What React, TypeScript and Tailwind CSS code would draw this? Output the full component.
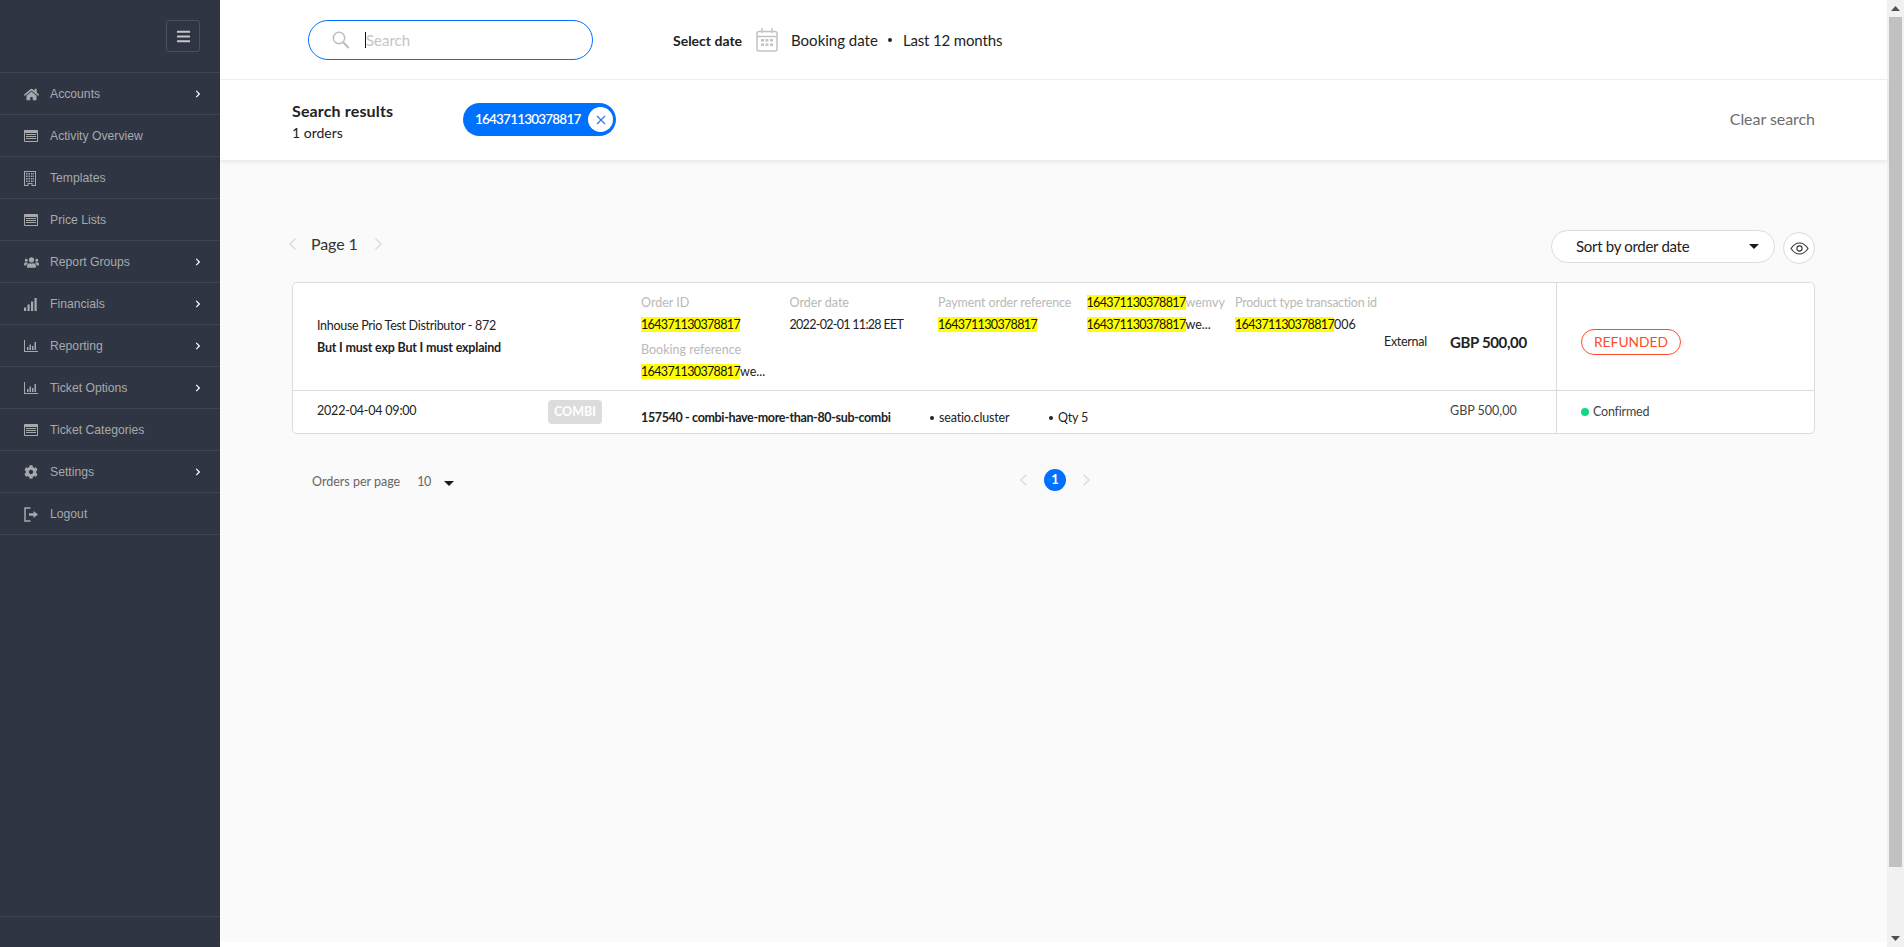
import React from "react";
import { FaHome, FaUsers, FaCog, FaChevronRight, FaBars } from "react-icons/fa";

const ListAlt = () => (
  <svg width="14" height="12" viewBox="0 0 14 12" fill="currentColor"><path fillRule="evenodd" d="M.8 0h12.400c.4 0 .8.4.8.8v10.400c0 .4-.4.8-.8.8H.8c-.4 0-.8-.4-.8-.8V.8C0 .4.4 0 .8 0zM1 3v8h12V3H1zm1 1h10v1H2V4zm0 2h10v1H2V6zm0 2h10v1H2V8z" /></svg>
);
const Building = () => (
  <svg width="12" height="15" viewBox="0 0 12 15" fill="currentColor"><path fillRule="evenodd" d="M0 0h12v15H7.500v-2h-3v2H0V0zm1 1v13h2.500v-2h5v2H11V1H1zm1 1h1.500v1.500H2V2zm2.500 0H6v1.500H4.500V2zM7 2h1.500v1.500H7V2zm2.200 0H10v1.500h-.8V2zM2 4.500h1.500V6H2V4.500zm2.500 0H6V6H4.500V4.500zm2.500 0h1.500V6H7V4.500zm2.200 0H10V6h-.8V4.500zM2 7h1.500v1.500H2V7zm2.500 0H6v1.500H4.500V7zM7 7h1.500v1.500H7V7zm2.200 0H10v1.500h-.8V7zM2 9.500h1.500V11H2V9.500zm2.500 0H6V11H4.500V9.500zm2.500 0h1.500V11H7V9.500zm2.200 0H10V11h-.8V9.500z" /></svg>
);
const Signal = () => (
  <svg width="13" height="13" viewBox="0 0 13 13" fill="currentColor"><path d="M0 9.500h2.200V13H0zM3.500 6.500h2.200V13H3.500zM7 3.500h2.200V13H7zM10.500 0h2.200v13h-2.200z" /></svg>
);
const ChartO = () => (
  <svg width="14" height="12" viewBox="0 0 14 12" fill="currentColor"><path d="M0 0h1v11h13v1H0z" /><path d="M3 7h1.500v3H3zM5.500 4.500H7V10H5.500zM8 6h1.500v4H8zM10.500 2H12v8h-1.500z" /></svg>
);
const Logout = () => (
  <svg width="14" height="15" viewBox="0 0 14 15" fill="none" stroke="currentColor"><path strokeWidth="1.500" d="M6.500 1H1v13h5.500" /><path fill="currentColor" stroke="none" d="M5 6.300h4.500V4l4.500 3.500-4.500 3.500V8.700H5z" /></svg>
);
const Chev = ({ dir, className }: { dir: "l" | "r"; className?: string }) => (
  <svg width="9" height="14" viewBox="0 0 9 14" fill="none" stroke="#dedede" strokeWidth="1.600" className={className}>
    <path d={dir === "l" ? "M7.500 1.500 2 7l5.500 5.500" : "M1.500 1.500 7 7l-5.500 5.500"} />
  </svg>
);
const Caret = ({ className }: { className?: string }) => (
  <svg width="10" height="5" viewBox="0 0 10 5" fill="#1a1a1a" className={className}><path d="M0 0h10L5 5z" /></svg>
);

const menu: [string, React.ReactNode, boolean][] = [
  ["Accounts", <FaHome size={15} />, true],
  ["Activity Overview", <ListAlt />, false],
  ["Templates", <Building />, false],
  ["Price Lists", <ListAlt />, false],
  ["Report Groups", <FaUsers size={15} />, true],
  ["Financials", <Signal />, true],
  ["Reporting", <ChartO />, true],
  ["Ticket Options", <ChartO />, true],
  ["Ticket Categories", <ListAlt />, false],
  ["Settings", <FaCog size={14} />, true],
  ["Logout", <Logout />, false],
];

const Hl = ({ children }: { children: React.ReactNode }) => (
  <span className="bg-[#ffff00] text-[#111] tracking-[-0.65px]">{children}</span>
);
const Label = ({ children }: { children: React.ReactNode }) => (
  <div className="h-[22px] text-[12.5px] leading-[21px] text-[#b9b9b9] whitespace-nowrap">{children}</div>
);
const Val = ({ children }: { children: React.ReactNode }) => (
  <div className="h-[25px] text-[12.5px] leading-[21px] text-[#222] whitespace-nowrap">{children}</div>
);
const Id = () => <Hl>164371130378817</Hl>;

function Sidebar() {
  return (
    <aside className="w-[220px] shrink-0 h-full bg-[#2f3542] flex flex-col font-['Liberation_Sans',sans-serif]">
      <div className="h-[72px] shrink-0 flex justify-end items-start pt-[20px] pr-[20px]">
        <div className="w-[34px] h-[32px] rounded-[3px] border border-[#4a505c] flex items-center justify-center text-[#c4c6ca]">
          <FaBars size={15} />
        </div>
      </div>
      {menu.map(([name, icon, arrow]) => (
        <div key={name} className="h-[42px] shrink-0 border-t border-[#3f4551] flex items-center pt-[1px] pl-[24px] pr-[18px] text-[#a7a9ad] text-[12.2px]">
          <span className="w-[26px] flex justify-start">{icon}</span>
          <span className="flex-1">{name}</span>
          {arrow && <FaChevronRight size={8} className="text-white" />}
        </div>
      ))}
      <div className="h-[382px] shrink-0 border-t border-[#3f4551]" />
      <div className="flex-1 border-t border-[#3f4551]" />
    </aside>
  );
}

export default function App() {
  return (
    <div className="flex h-[947px] w-[1904px] overflow-hidden bg-white font-['Lato',sans-serif] text-[#222]">
      <Sidebar />
      <main className="w-[1667px] shrink-0 flex flex-col h-full">
        <header className="h-[79px] shrink-0 flex items-center pl-[88px] pt-[1px] bg-white">
          <div className="w-[285px] h-[40px] rounded-full border border-[#0070ff] flex items-center pl-[23px]">
            <svg width="18" height="18" viewBox="0 0 18 18" fill="none" stroke="#bdbdbd" strokeWidth="1.500"><circle cx="7" cy="7" r="5.700" /><path strokeWidth="2" d="m11.200 11.200 5.500 5.800" /></svg>
            <span className="ml-[15px] w-px h-[16px] bg-[#111]" />
            <span className="text-[15px] text-[#c4c4c4]">Search</span>
          </div>
          <span className="ml-[80px] text-[14px] font-bold text-[#222]">Select date</span>
          <svg className="ml-[14px]" width="22" height="24" viewBox="0 0 22 24" fill="none" stroke="#c2c2c2" strokeWidth="1.500">
            <rect x="1" y="3.500" width="20" height="19.500" rx="2" /><path d="M1 8.500h20M6 0v5M16 0v5" />
            <path stroke="none" fill="#c2c2c2" d="M5 11h3v2.500H5zM9.500 11h3v2.500h-3zM14 11h3v2.500h-3zM5 15.500h3V18H5zM9.500 15.500h3V18h-3zM14 15.500h3V18h-3z" />
          </svg>
          <span className="ml-[13px] text-[15px] text-[#222]">Booking date</span>
          <span className="ml-[10px] w-[4px] h-[4px] rounded-full bg-[#222]" />
          <span className="ml-[11px] text-[15px] text-[#222] tracking-[-0.15px]">Last 12 months</span>
        </header>
        <section className="h-[81px] shrink-0 bg-white flex items-center px-[72px] border-t border-[#eeeeee] shadow-[0_2px_4px_rgba(0,0,0,0.08)] relative">
          <div className="w-[171px] mt-[3px]">
            <div className="text-[16px] leading-[22px] font-bold text-[#222] tracking-[0.15px]">Search results</div>
            <div className="text-[14px] leading-[22px] text-[#222]">1 orders</div>
          </div>
          <div className="w-[153px] h-[33px] mb-[1px] rounded-full bg-[#0070ff] flex items-center justify-between pl-[12px] pr-[3px] text-white text-[13.5px] font-semibold tracking-[-0.8px]">
            <span>164371130378817</span>
            <span className="w-[25px] h-[25px] rounded-full bg-white flex items-center justify-center">
              <svg width="10" height="10" viewBox="0 0 10 10" stroke="#3b6fd8" strokeWidth="1.100"><path d="m1 1 8 8M9 1 1 9" /></svg>
            </span>
          </div>
          <span className="ml-auto mb-[3px] text-[16px] text-[#6d6d6d] tracking-[-0.05px]">Clear search</span>
        </section>
        <div className="h-[782px] shrink-0 bg-[#fafafa] px-[72px] pt-[70px]">
          <div className="h-[52px] flex items-start">
            <div className="flex items-center h-[28px]">
              <Chev dir="l" className="-ml-[4px]" />
              <span className="ml-[14px] text-[16px] text-[#333] tracking-[-0.1px]">Page 1</span>
              <Chev dir="r" className="ml-[16px]" />
            </div>
            <div className="ml-auto w-[224px] h-[33px] rounded-full border border-[#dcdcdc] bg-white flex items-center pl-[24px] pr-[15px] text-[15px] text-[#222] tracking-[-0.3px]">
              <span className="flex-1">Sort by order date</span>
              <Caret />
            </div>
            <div className="ml-[8px] mt-[2px] w-[32px] h-[32px] rounded-full border border-[#dcdcdc] bg-white flex items-center justify-center">
              <svg width="19" height="13" viewBox="0 0 19 13" fill="none" stroke="#333" strokeWidth="1.100"><path d="M1 6.500C3.500 2.800 6.200 1 9.500 1s6 1.800 8.500 5.500c-2.500 3.700-5.200 5.500-8.500 5.500S3.500 10.200 1 6.500z" /><circle cx="9.500" cy="6.500" r="2.600" /></svg>
            </div>
          </div>
          <div className="h-[152px] rounded-[5px] border border-[#dcdcdc] bg-white flex">
            <div className="w-[1263px] shrink-0 flex flex-col">
              <div className="h-[108px] flex border-b border-[#dcdcdc]">
                <div className="w-[348px] shrink-0 pl-[24px] pt-[32px]">
                  <div className="h-[22px] text-[12.5px] leading-[22px] text-[#222] tracking-[-0.3px]">Inhouse Prio Test Distributor - 872</div>
                  <div className="h-[22px] text-[12.5px] leading-[22px] font-bold text-[#222] tracking-[-0.2px]">But I must exp But I must explaind</div>
                </div>
                <div className="w-[743px] shrink-0 flex flex-wrap content-start pt-[9px]">
                  <div className="w-[148.500px] h-[47px]"><Label>Order ID</Label><Val><Id /></Val></div>
                  <div className="w-[148.500px] h-[47px]"><Label>Order date</Label><Val><span className="tracking-[-0.7px]">2022-02-01 11:28 EET</span></Val></div>
                  <div className="w-[148.500px] h-[47px]"><Label><span className="tracking-[-0.1px]">Payment order reference</span></Label><Val><Id /></Val></div>
                  <div className="w-[148.500px] h-[47px]"><Label><Id />wemvy</Label><Val><Id />we...</Val></div>
                  <div className="w-[148.500px] h-[47px]"><Label><span className="tracking-[-0.25px]">Product type transaction id</span></Label><Val><Id />006</Val></div>
                  <div className="w-[148.500px] h-[47px]"><Label>Booking reference</Label><Val><Id />we...</Val></div>
                </div>
                <div className="w-[65px] shrink-0 self-center text-[12.5px] text-[#222] mt-[12px] tracking-[-0.3px]">External</div>
                <div className="ml-[1px] self-center text-[15px] font-bold text-[#222] mt-[11px] tracking-[-0.35px]">GBP 500,00</div>
              </div>
              <div className="flex-1 flex">
                <div className="w-[348px] shrink-0 pl-[24px] flex items-start pt-[10px]">
                  <span className="w-[231px] text-[12.5px] leading-[20px] tracking-[-0.2px]">2022-04-04 09:00</span>
                  <span className="mt-[-1px] w-[54px] h-[24px] rounded-[4px] bg-[#dcdcdc] text-white text-[12.5px] font-bold flex items-center justify-center">COMBI</span>
                </div>
                <div className="w-[289px] shrink-0 pt-[18px] text-[12.5px] leading-[18px] font-bold tracking-[-0.35px]">157540 - combi-have-more-than-80-sub-combi</div>
                <div className="w-[119px] shrink-0 pt-[18px] text-[12.5px] leading-[18px] flex items-center h-[36px] tracking-[-0.15px]"><span className="w-[4px] h-[4px] rounded-full bg-[#222] mr-[5px]" />seatio.cluster</div>
                <div className="w-[401px] shrink-0 pt-[18px] text-[12.5px] leading-[18px] flex items-center h-[36px] tracking-[-0.2px]"><span className="w-[4px] h-[4px] rounded-full bg-[#222] mr-[5px]" />Qty 5</div>
                <div className="pt-[10px] text-[12.5px] leading-[20px] text-[#444]">GBP 500,00</div>
              </div>
            </div>
            <div className="flex-1 border-l border-[#dcdcdc] flex flex-col">
              <div className="h-[108px] border-b border-[#dcdcdc] pl-[24px] flex items-center">
                <span className="mt-[11px] w-[100px] h-[26px] rounded-full border border-[#ff4b2b] flex items-center justify-center text-[13.8px] text-[#ff4b2b]">REFUNDED</span>
              </div>
              <div className="flex-1 pl-[24px] flex items-center text-[12.5px] text-[#444] tracking-[-0.2px]">
                <span className="w-[8px] h-[8px] rounded-full bg-[#10d97f] mr-[4px]" />Confirmed
              </div>
            </div>
          </div>
          <div className="mt-[34px] h-[24px] flex items-center">
            <div className="w-[680px] flex items-center pl-[20px] text-[12.5px] text-[#666]">
              <span className="mt-[4px]">Orders per page</span>
              <span className="ml-[17px] mt-[4px] tracking-[-0.6px]">10</span>
              <Caret className="ml-[13px] mt-[6px]" />
            </div>
            <Chev dir="l" className="ml-[47px]" />
            <span className="ml-[16px] w-[22px] h-[22px] rounded-full bg-[#0070ff] text-white text-[13px] font-bold flex items-center justify-center">1</span>
            <Chev dir="r" className="ml-[16px]" />
          </div>
        </div>
        <div className="flex-1 bg-white" />
      </main>
      <div className="w-[17px] shrink-0 h-full bg-[#f1f1f1] flex flex-col items-center">
        <svg className="mt-[6px]" width="9" height="5" viewBox="0 0 9 5" fill="#505050"><path d="M4.500 0 9 5H0z" /></svg>
        <div className="mt-[6px] w-[13px] h-[850px] bg-[#c1c1c1]" />
        <svg className="mt-auto mb-[6px]" width="9" height="5" viewBox="0 0 9 5" fill="#505050"><path d="M0 0h9L4.500 5z" /></svg>
      </div>
    </div>
  );
}
